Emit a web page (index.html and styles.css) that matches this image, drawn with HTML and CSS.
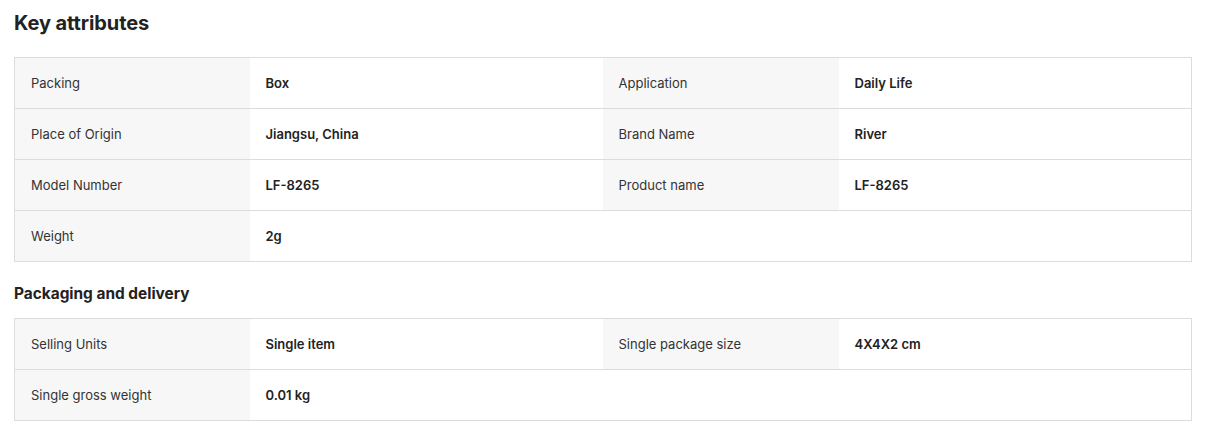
FILE: index.html
```html
<!DOCTYPE html>
<html>
<head>
<meta charset="utf-8">
<link rel="stylesheet" href="styles.css">
</head>
<body>
<div class="page">
  <h2 class="title">Key attributes</h2>
  <table class="attrs">
    <colgroup><col class="c-l1"><col class="c-v1"><col class="c-l2"><col class="c-v2"></colgroup>
    <tr><td class="lbl">Packing</td><td class="val">Box</td><td class="lbl">Application</td><td class="val">Daily Life</td></tr>
    <tr><td class="lbl">Place of Origin</td><td class="val">Jiangsu, China</td><td class="lbl">Brand Name</td><td class="val">River</td></tr>
    <tr><td class="lbl">Model Number</td><td class="val">LF-8265</td><td class="lbl">Product name</td><td class="val">LF-8265</td></tr>
    <tr><td class="lbl">Weight</td><td class="val">2g</td><td class="val"></td><td class="val"></td></tr>
  </table>
  <h3 class="subtitle">Packaging and delivery</h3>
  <table class="attrs">
    <colgroup><col class="c-l1"><col class="c-v1"><col class="c-l2"><col class="c-v2"></colgroup>
    <tr><td class="lbl">Selling Units</td><td class="val">Single item</td><td class="lbl">Single package size</td><td class="val">4X4X2 cm</td></tr>
    <tr><td class="lbl">Single gross weight</td><td class="val">0.01 kg</td><td class="val"></td><td class="val"></td></tr>
  </table>
</div>
</body>
</html>
```
FILE: styles.css
```css
html, body { margin: 0; padding: 0; background: #fff; }
body { font-family: Inter, "Noto Sans", sans-serif; color: #222; }
.page { padding: 9px 13px 0 14px; }
.title { margin: 0; font-size: 20px; line-height: 28px; font-weight: 700; color: #222; letter-spacing: -0.1px; }
.subtitle { margin: 20px 0 0; font-size: 15.4px; line-height: 24px; font-weight: 700; color: #222; }
.attrs {
  width: 1177px;
  border-collapse: collapse;
  table-layout: fixed;
  border: 1px solid #dcdcdc;
  margin-top: 12px;
}
.title + .attrs { margin-top: 20px; }
.c-l1 { width: 235px; }
.c-v1 { width: 353px; }
.c-l2 { width: 236px; }
.c-v2 { width: 353px; }
.attrs tr { border-bottom: 1px solid #dcdcdc; }
.attrs td { height: 51px; padding: 0 16px; font-size: 13px; vertical-align: middle; box-sizing: border-box; }
.lbl { background: #f7f7f7; color: #333; font-weight: 400; }
.val { background: #fff; color: #222; font-weight: 600; font-size: 13.3px; }
```
